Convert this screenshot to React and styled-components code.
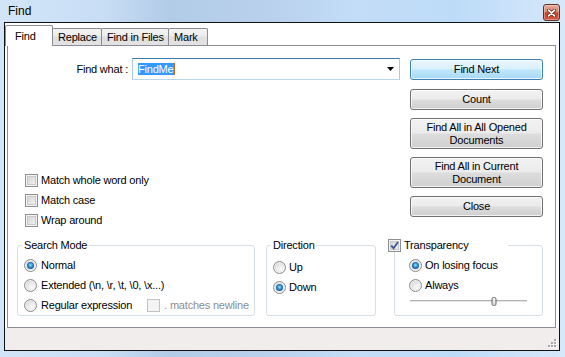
import React from 'react'
import styled, { createGlobalStyle, css } from 'styled-components'

const GlobalStyle = createGlobalStyle`
  html, body { margin: 0; padding: 0; }
  body {
    font-family: "Liberation Sans", Arial, sans-serif;
    font-size: 11px;
    letter-spacing: -0.2px;
    color: #000;
    background: #fff;
  }
  * { box-sizing: border-box; }
`

const Window = styled.div`
  width: 565px;
  height: 357px;
  display: flex;
  flex-direction: column;
  padding: 0 5px 6px 4px;
  background: linear-gradient(90deg, #d2e5f8 0%, #c8def5 18%, #b2cbe7 30%, #b9d1ec 48%, #c3dcf6 62%, #bddbf8 80%, #d6e8fa 100%);
`

const TitleBar = styled.div`
  height: 22px;
  flex: none;
  display: flex;
  align-items: flex-start;
  justify-content: space-between;
  padding-left: 4px;
`

const Title = styled.span`
  font-size: 12px;
  letter-spacing: 0;
  line-height: 22px;
  color: #000;
`

const CloseButton = styled.div`
  width: 17px;
  height: 17px;
  margin-top: 4px;
  border: 1px solid #5e2f24;
  border-radius: 3px;
  background: linear-gradient(#eaab9c 0%, #dc806b 45%, #c7442a 52%, #d35a3f 100%);
  box-shadow: inset 0 0 0 1px rgba(255, 255, 255, 0.35);
  display: flex;
  align-items: center;
  justify-content: center;
`

const Client = styled.div`
  flex: 1;
  display: flex;
  flex-direction: column;
  border: 1px solid #111;
  background: #fff;
`

const TabStrip = styled.div`
  height: 23px;
  flex: none;
  display: flex;
  align-items: flex-end;
  margin: 0 3px -1px 2px;
  position: relative;
  z-index: 1;
`

const Tab = styled.div`
  width: ${(p) => p.$w}px;
  height: ${(p) => (p.$active ? 21 : 17)}px;
  margin: 0 0 ${(p) => (p.$active ? 0 : 1)}px ${(p) => (p.$active ? -2 : -1)}px;
  padding-left: ${(p) => (p.$active ? 9 : 5)}px;
  padding-bottom: ${(p) => (p.$active ? 1 : 0)}px;
  border: 1px solid #898c95;
  border-bottom: none;
  border-radius: 2px 2px 0 0;
  display: flex;
  align-items: center;
  white-space: nowrap;
  overflow: hidden;
  position: relative;
  z-index: ${(p) => (p.$active ? 2 : 0)};
  background: ${(p) => (p.$active ? '#fff' : 'linear-gradient(#f4f4f4, #ebebeb 45%, #dedede 50%, #e3e3e3)')};
  &:first-child { margin-left: -2px; }
`

const Panel = styled.div`
  flex: 1;
  margin: 0 3px 0 2px;
  border: 1px solid #898c95;
  background: #fff;
  padding: 12px 12px 0 9px;
  display: flex;
  flex-direction: column;
`

const TopArea = styled.div`
  height: 172px;
  display: flex;
  justify-content: space-between;
`

const LeftCol = styled.div`
  width: 383px;
  display: flex;
  flex-direction: column;
`

const FindRow = styled.div`
  height: 22px;
  display: flex;
  align-items: center;
`

const FindLabel = styled.label`
  width: 111px;
  margin-right: 4px;
  text-align: right;
  white-space: nowrap;
`

const Combo = styled.div`
  width: 268px;
  height: 22px;
  border: 1px solid;
  border-color: #3d7bad #a9cbe6 #b7d9ed #a9cbe6;
  display: flex;
  align-items: center;
  justify-content: space-between;
  padding: 0 5px 0 5px;
`

const Selected = styled.span`
  background: #3399ff;
  color: #fff;
  line-height: 12px;
  padding-right: 1px;
  border-right: 1px solid #c46a18;
`

const CheckList = styled.div`
  margin-top: 90px;
  display: flex;
  flex-direction: column;
`

const OptionRow = styled.div`
  height: 20px;
  display: flex;
  align-items: center;
  gap: ${(p) => p.$gap || 3}px;
  padding-left: ${(p) => p.$indent || 0}px;
  white-space: nowrap;
`

const CheckBox = styled.span`
  width: 13px;
  height: 13px;
  flex: none;
  display: flex;
  align-items: center;
  justify-content: center;
  border: 1px solid ${(p) => (p.$disabled ? '#c2c2c2' : '#8e8f8f')};
  background: ${(p) => (p.$disabled ? '#f4f4f4' : 'linear-gradient(135deg, #cfcfcf, #f7f7f7)')};
  box-shadow: ${(p) => (p.$disabled ? 'none' : 'inset 0 0 0 1px #f3f3f3, inset 0 0 0 2px #c9c9c9')};
  margin-left: ${(p) => p.$ml || 0}px;
`

const Radio = styled.span`
  width: 13px;
  height: 13px;
  flex: none;
  border-radius: 50%;
  border: 1px solid #8a8c8e;
  background: radial-gradient(circle at 62% 65%, #fafafa 0%, #e2e2e2 55%, #c4c4c4 100%);
  box-shadow: inset 0 0 0 1px #f2f2f2;
  display: flex;
  align-items: center;
  justify-content: center;
  ${(p) =>
    p.$checked &&
    css`
      &::after {
        content: '';
        width: 7px;
        height: 7px;
        border-radius: 50%;
        background: radial-gradient(circle at 50% 45%, #a6e6ff 0%, #3a97d8 35%, #175a9a 70%, #0d3564 100%);
      }
    `}
`

const Muted = styled.span`
  color: #8d8d8d;
`

const ButtonCol = styled.div`
  width: 133px;
  margin-top: 1px;
  display: flex;
  flex-direction: column;
  gap: 8px;
`

const Button = styled.div`
  height: ${(p) => p.$h || 21}px;
  border: 1px solid ${(p) => (p.$primary ? '#3c7fb1' : '#707070')};
  border-radius: 3px;
  background: ${(p) =>
    p.$primary
      ? 'linear-gradient(#eaf6fd 0%, #d9f0fc 48%, #bee6fd 52%, #a7d9f5 100%)'
      : 'linear-gradient(#f2f2f2 0%, #ebebeb 48%, #dddddd 52%, #cfcfcf 100%)'};
  box-shadow: inset 0 0 0 1px rgba(255, 255, 255, 0.75);
  display: flex;
  align-items: center;
  justify-content: center;
  text-align: center;
  line-height: 13px;
  margin-bottom: ${(p) => p.$mb || 0}px;
`

const GroupRow = styled.div`
  margin-top: 8.5px;
  display: flex;
`

const Group = styled.fieldset`
  width: ${(p) => p.$w}px;
  min-width: 0;
  margin: 0 ${(p) => p.$mr || 0}px 0 0;
  padding: ${(p) => p.$pt}px 0 0 ${(p) => p.$pl}px;
  border: 1px solid #d5dfe5;
  border-radius: 3px;
`

const Legend = styled.legend`
  height: 13px;
  line-height: 13px;
  padding: 0 2px;
  margin-left: -2px;
`

const CheckLegend = styled.legend`
  width: 120px;
  height: 13px;
  padding: 0;
  margin-left: -21px;
  display: flex;
  align-items: center;
  gap: 3px;
`

const SliderRow = styled.div`
  width: 117px;
  height: 12px;
  margin-left: 1px;
  position: relative;
  display: flex;
  align-items: center;
`

const Track = styled.div`
  width: 100%;
  height: 3px;
  border-top: 1px solid #b0b0b0;
  border-bottom: 1px solid #fff;
  background: #e6e6e6;
`

const Thumb = styled.div`
  position: absolute;
  top: 2px;
  width: 5px;
  height: 9px;
  transform: translateX(-50%);
  border: 1px solid #6a6a6a;
  border-radius: 2px;
  background: linear-gradient(#f7f7f7, #d6d6d6);
`

const StatusBar = styled.div`
  height: 22px;
  flex: none;
  background: #f0edec;
  display: flex;
  align-items: flex-end;
  justify-content: flex-end;
  padding: 0 2px 2px 0;
`

const CloseGlyph = () => (
  <svg width="9" height="8" viewBox="0 0 9 8">
    <path d="M1.5 1.2 L7.5 6.8 M7.5 1.2 L1.5 6.8" stroke="#5a2318" strokeWidth="3.2" strokeLinecap="round" />
    <path d="M1.5 1.2 L7.5 6.8 M7.5 1.2 L1.5 6.8" stroke="#fff" strokeWidth="1.7" strokeLinecap="round" />
  </svg>
)

const DropArrow = () => (
  <svg width="7" height="4" viewBox="0 0 7 4">
    <path d="M0 0 H7 L3.5 4 Z" fill="#000" />
  </svg>
)

const CheckMark = () => (
  <svg width="9" height="9" viewBox="0 0 9 9">
    <path d="M1.2 4.6 L3.6 7.2 L8 1" fill="none" stroke="#3f5796" strokeWidth="1.8" />
  </svg>
)

const Grip = () => (
  <svg width="10" height="10" viewBox="0 0 10 10">
    {[[8, 2], [5, 5], [8, 5], [2, 8], [5, 8], [8, 8]].map(([x, y]) => (
      <g key={`${x}-${y}`}>
        <rect x={x} y={y} width="2" height="2" fill="#fff" />
        <rect x={x - 1} y={y - 1} width="2" height="2" fill="#a9a6a3" />
      </g>
    ))}
  </svg>
)

const tabs = [
  { label: 'Find', w: 48, active: true },
  { label: 'Replace', w: 50 },
  { label: 'Find in Files', w: 68 },
  { label: 'Mark', w: 40 },
]

const buttons = [
  { label: 'Find Next', primary: true, mb: 1 },
  { label: 'Count' },
  { label: <>Find All in All Opened<br />Documents</>, h: 31 },
  { label: <>Find All in Current<br />Document</>, h: 31 },
  { label: 'Close' },
]

const transparency = 72

const App = () => {
  return (
    <>
      <GlobalStyle />
      <Window>
        <TitleBar>
          <Title>Find</Title>
          <CloseButton><CloseGlyph /></CloseButton>
        </TitleBar>

        <Client>
          <TabStrip>
            {tabs.map((t) => (
              <Tab key={t.label} $w={t.w} $active={t.active}>{t.label}</Tab>
            ))}
          </TabStrip>

          <Panel>
            <TopArea>
              <LeftCol>
                <FindRow>
                  <FindLabel>Find what :</FindLabel>
                  <Combo>
                    <Selected>FindMe</Selected>
                    <DropArrow />
                  </Combo>
                </FindRow>

                <CheckList>
                  <OptionRow $indent={8}><CheckBox />Match whole word only</OptionRow>
                  <OptionRow $indent={8}><CheckBox />Match case</OptionRow>
                  <OptionRow $indent={8}><CheckBox />Wrap around</OptionRow>
                </CheckList>
              </LeftCol>

              <ButtonCol>
                {buttons.map((b, i) => (
                  <Button key={i} $primary={b.primary} $h={b.h} $mb={b.mb}>{b.label}</Button>
                ))}
              </ButtonCol>
            </TopArea>

            <GroupRow>
              <Group $w={238} $mr={11} $pt={3.5} $pl={6}>
                <Legend>Search Mode</Legend>
                <OptionRow $gap={4}><Radio $checked />Normal</OptionRow>
                <OptionRow $gap={4}><Radio />Extended (\n, \r, \t, \0, \x...)</OptionRow>
                <OptionRow $gap={4}>
                  <Radio />Regular expression
                  <CheckBox $disabled $ml={11} />
                  <Muted>. matches newline</Muted>
                </OptionRow>
              </Group>

              <Group $w={110} $mr={18} $pt={5.5} $pl={6}>
                <Legend>Direction</Legend>
                <OptionRow $gap={3}><Radio />Up</OptionRow>
                <OptionRow $gap={3}><Radio $checked />Down</OptionRow>
              </Group>

              <Group $w={149} $pt={3.5} $pl={14}>
                <CheckLegend><CheckBox><CheckMark /></CheckBox>Transparency</CheckLegend>
                <OptionRow $gap={3}><Radio $checked />On losing focus</OptionRow>
                <OptionRow $gap={3}><Radio />Always</OptionRow>
                <SliderRow>
                  <Track />
                  <Thumb style={{ left: `${transparency}%` }} />
                </SliderRow>
              </Group>
            </GroupRow>
          </Panel>

          <StatusBar><Grip /></StatusBar>
        </Client>
      </Window>
    </>
  )
}

export default App
